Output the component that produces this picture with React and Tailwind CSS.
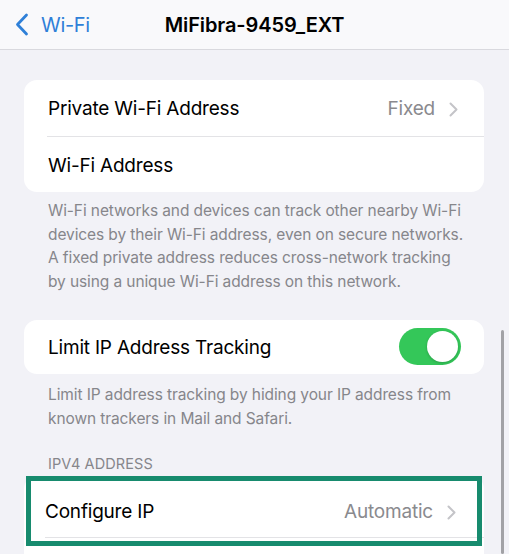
import React from "react";

function Chevron({ className = "" }) {
  return (
    <svg width="9" height="15" viewBox="0 0 9 15" className={className} fill="none">
      <path d="M1.5 1.5L7.5 7.5L1.5 13.5" stroke="#c4c4c8" strokeWidth="2" strokeLinecap="round" strokeLinejoin="round" />
    </svg>
  );
}

export default function App() {
  return (
    <div
      className="relative w-[509px] h-[554px] overflow-hidden bg-[#f2f2f7] text-black"
      style={{ fontFamily: 'Inter, "Noto Sans", "Liberation Sans", sans-serif' }}
    >
      {/* Header */}
      <div className="h-[50px] bg-[#f9f9fb] border-b border-[#d9d9de] flex items-center relative">
        <div className="flex items-center pl-[15px] text-[#2f80d8]">
          <svg width="14" height="23" viewBox="0 0 14 23" fill="none">
            <path d="M11.5 2L2.5 11.5L11.5 21" stroke="#2f80d8" strokeWidth="2.8" strokeLinecap="round" strokeLinejoin="round" />
          </svg>
          <span className="ml-[12px] text-[20px] leading-none tracking-[-0.3px]">Wi-Fi</span>
        </div>
        <div className="absolute left-0 right-0 text-center text-[20px] font-semibold leading-none tracking-[-0.1px] pointer-events-none">
          MiFibra-9459_EXT
        </div>
      </div>

      {/* Card 1 */}
      <div className="ml-[24px] mr-[25px] mt-[30px] bg-white rounded-[13px]">
        <div className="h-[56px] flex items-center pt-[2px] pl-[24px] pr-[26px]">
          <span className="text-[19px] tracking-[-0.2px] flex-1">Private Wi-Fi Address</span>
          <span className="text-[19px] tracking-[-0.2px] text-[#8a8a8e] mr-[14px]">Fixed</span>
          <Chevron />
        </div>
        <div className="ml-[23px] h-px bg-[#e3e3e6]" />
        <div className="h-[55px] flex items-center pt-[3px] pl-[24px] pr-[26px]">
          <span className="text-[19px] tracking-[-0.2px] flex-1">Wi-Fi Address</span>
        </div>
      </div>
      <p className="ml-[48px] mr-[30px] mt-[7px] text-[15.5px] leading-[23.7px] text-[#86868b] tracking-[-0.1px]">
        Wi-Fi networks and devices can track other nearby Wi-Fi
        <br />
        devices by their Wi-Fi address, even on secure networks.
        <br />
        A fixed private address reduces cross-network tracking
        <br />
        by using a unique Wi-Fi address on this network.
      </p>

      {/* Card 2 */}
      <div className="ml-[24px] mr-[25px] mt-[26px] bg-white rounded-[13px] h-[54px] flex items-center pt-[3px] pl-[24px] pr-[23px]">
        <span className="text-[19px] tracking-[-0.2px] flex-1">Limit IP Address Tracking</span>
        <div className="w-[62px] h-[37px] -mt-[3px] rounded-full bg-[#34c759] flex items-center justify-end p-[3px]">
          <div className="w-[31px] h-[31px] rounded-full bg-white shadow-[0_1px_3px_rgba(0,0,0,0.2)]" />
        </div>
      </div>
      <p className="ml-[48px] mr-[30px] mt-[9px] text-[15.5px] leading-[23.7px] text-[#86868b] tracking-[-0.1px]">
        Limit IP address tracking by hiding your IP address from
        <br />
        known trackers in Mail and Safari.
      </p>

      <div className="ml-[48px] mt-[24px] text-[14.5px] leading-[20px] text-[#86868b] tracking-[0.1px]">
        IPV4 ADDRESS
      </div>

      {/* Card 3 */}
      <div className="relative ml-[24px] mr-[25px] mt-[2px] bg-white rounded-t-[13px]">
        <div className="h-[61px] flex items-center pt-[11px] pl-[21px] pr-[28px]">
          <span className="text-[19px] tracking-[-0.2px] flex-1">Configure IP</span>
          <span className="text-[19px] tracking-[-0.2px] text-[#8a8a8e] mr-[14px]">Automatic</span>
          <Chevron />
        </div>
        <div className="ml-[21px] h-px bg-[#e3e3e6]" />
        <div className="h-[20px]" />
        <div className="absolute left-[2px] right-[2px] top-0 h-[70px] border-[5px] border-[#178b6e]" />
      </div>

      {/* Scrollbar */}
      <div className="absolute right-[5px] top-[330px] bottom-0 w-[3px] rounded-full bg-[#a2a2a6]" />
    </div>
  );
}
